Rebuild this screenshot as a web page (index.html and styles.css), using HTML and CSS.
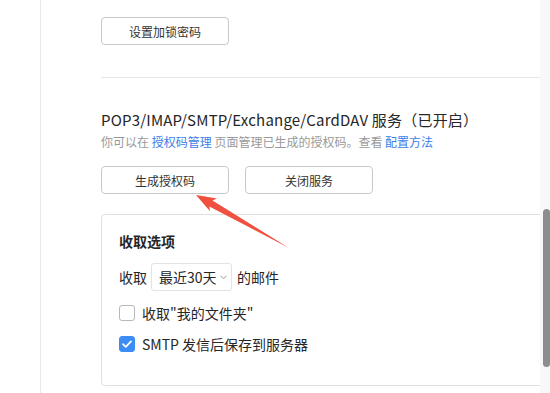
FILE: index.html
```html
<!DOCTYPE html>
<html lang="zh-CN">
<head>
<meta charset="utf-8">
<link rel="stylesheet" href="styles.css">
</head>
<body>
<div class="page">
  <aside class="sidebar"></aside>
  <main class="main">
    <div class="lock-section">
      <button class="btn">设置加锁密码</button>
    </div>
    <div class="divider"></div>
    <section class="service">
      <h3 class="title">POP3/IMAP/SMTP/Exchange/CardDAV 服务（已开启）</h3>
      <p class="desc">你可以在 <a class="link">授权码管理</a> 页面管理已生成的授权码。查看 <a class="link">配置方法</a></p>
      <div class="btn-row">
        <button class="btn">生成授权码</button>
        <button class="btn">关闭服务</button>
      </div>
      <div class="card">
        <h4 class="card-title">收取选项</h4>
        <div class="row select-row">
          <span>收取</span>
          <span class="select">最近30天<svg class="chev" width="7" height="5" viewBox="0 0 7 5"><path d="M0.5 0.8 L3.5 3.8 L6.5 0.8" fill="none" stroke="#999" stroke-width="1"/></svg></span>
          <span>的邮件</span>
        </div>
        <label class="row check-row">
          <span class="checkbox"></span>
          <span>收取"我的文件夹"</span>
        </label>
        <label class="row check-row second">
          <span class="checkbox checked"><svg width="16" height="16" viewBox="0 0 16 16"><path d="M4 8.2 L6.8 10.8 L12 5.4" fill="none" stroke="#fff" stroke-width="1.8" stroke-linecap="round" stroke-linejoin="round"/></svg></span>
          <span>SMTP 发信后保存到服务器</span>
        </label>
      </div>
    </section>
  </main>
  <div class="scrollbar"><div class="thumb"></div></div>
  <svg class="arrow" width="550" height="393" viewBox="0 0 550 393">
    <polygon points="196,195 217,198.6 212.5,200.6 289,248 209.3,206.4 210,211.2" fill="#f0503f"/>
  </svg>
</div>
</body>
</html>
```

FILE: styles.css
```css
* { box-sizing: border-box; }
html, body { margin: 0; padding: 0; background: #fff; }
body {
  font-family: "Noto Sans CJK SC", "Liberation Sans", sans-serif;
  color: #333;
}
.page {
  position: relative;
  display: flex;
  width: 550px;
  height: 393px;
  overflow: hidden;
}
.sidebar {
  width: 41px;
  flex: none;
  border-right: 1px solid #e8e8e8;
}
.main {
  flex: 1;
  min-width: 0;
  padding-left: 60px;
  overflow: hidden;
}
.lock-section { padding-top: 17px; }
.btn {
  display: inline-flex;
  align-items: center;
  justify-content: center;
  width: 128px;
  height: 28px;
  padding: 0;
  border: 1px solid #c9c9c9;
  border-radius: 4px;
  background: #fff;
  font-family: inherit;
  font-size: 12px;
  color: #333;
}
.divider {
  height: 1px;
  background: #e6e6e6;
  margin-top: 32px;
}
.title {
  margin: 30px 0 0;
  font-size: 15px;
  line-height: 24px;
  font-weight: normal;
  color: #262626;
  letter-spacing: 0.2px;
  white-space: nowrap;
}
.desc {
  margin: 0;
  font-size: 12px;
  line-height: 20px;
  color: #999;
  white-space: nowrap;
}
.link { color: #3b7de8; }
.btn-row {
  display: flex;
  gap: 16px;
  margin-top: 14px;
}
.card {
  margin-top: 20px;
  margin-right: -10px;
  height: 172px;
  border: 1px solid #e0e0e0;
  border-radius: 4px;
  padding: 16px 17px;
}
.card-title {
  margin: 0;
  font-size: 14px;
  line-height: 20px;
  font-weight: bold;
  color: #262626;
}
.row {
  display: flex;
  align-items: center;
  font-size: 14px;
  color: #262626;
  white-space: nowrap;
}
.select-row {
  margin-top: 12px;
  height: 28px;
}
.select {
  display: inline-flex;
  align-items: center;
  gap: 3px;
  width: 81px;
  height: 28px;
  margin: 0 5px 0 4px;
  padding: 0 0 0 7px;
  border: 1px solid #e3e3e3;
  border-radius: 3px;
  white-space: nowrap;
}
.chev { margin-top: 1px; flex: none; }
.check-row {
  margin-top: 12px;
  height: 20px;
  gap: 7px;
}
.check-row.second { margin-top: 11px; }
.checkbox {
  width: 16px;
  height: 16px;
  flex: none;
  border: 1px solid #b8b8b8;
  border-radius: 3px;
  background: #fff;
}
.checkbox.checked {
  border-color: #3b8cf3;
  background: #3b8cf3;
  position: relative;
}
.checkbox.checked svg {
  position: absolute;
  left: -1px;
  top: -1px;
}
.scrollbar {
  width: 10px;
  flex: none;
  background: #f8f8f8;
  padding-top: 209px;
  padding-left: 3px;
}
.thumb {
  width: 7px;
  height: 158px;
  border-radius: 4px;
  background: #8d8d8d;
}
.arrow {
  position: absolute;
  left: 0;
  top: 0;
  pointer-events: none;
}
```
